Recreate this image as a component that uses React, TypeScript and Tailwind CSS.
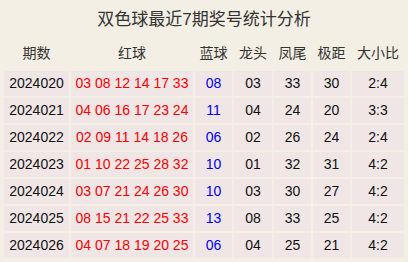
const rows = [
  { qi: "2024020", red: "03 08 12 14 17 33", blue: "08", head: "03", tail: "33", span: "30", ratio: "2:4" },
  { qi: "2024021", red: "04 06 16 17 23 24", blue: "11", head: "04", tail: "24", span: "20", ratio: "3:3" },
  { qi: "2024022", red: "02 09 11 14 18 26", blue: "06", head: "02", tail: "26", span: "24", ratio: "2:4" },
  { qi: "2024023", red: "01 10 22 25 28 32", blue: "10", head: "01", tail: "32", span: "31", ratio: "4:2" },
  { qi: "2024024", red: "03 07 21 24 26 30", blue: "10", head: "03", tail: "30", span: "27", ratio: "4:2" },
  { qi: "2024025", red: "08 15 21 22 25 33", blue: "13", head: "08", tail: "33", span: "25", ratio: "4:2" },
  { qi: "2024026", red: "04 07 18 19 20 25", blue: "06", head: "04", tail: "25", span: "21", ratio: "4:2" },
];

const headers = ["期数", "红球", "蓝球", "龙头", "凤尾", "极距", "大小比"];

export default function App() {
  return (
    <div className="w-[408px] h-[262px] bg-[#f4efe4] font-['Liberation_Sans','Noto_Sans_CJK_SC',sans-serif] overflow-hidden">
      <div className="h-[36px] pt-[4px] flex items-center justify-center text-[17px] text-[#333]">
        双色球最近7期奖号统计分析
      </div>
      <table className="ml-[2px] w-[404px] table-fixed border-separate border-spacing-[2px] text-[14px]">
        <colgroup>
          <col className="w-[65px]" />
          <col className="w-[122px]" />
          <col className="w-[37px]" />
          <col className="w-[38px]" />
          <col className="w-[37px]" />
          <col className="w-[37px]" />
          <col className="w-[52px]" />
        </colgroup>
        <thead>
          <tr>
            {headers.map((h) => (
              <th key={h} className="h-[31px] p-0 font-normal text-[#333] text-center">
                {h}
              </th>
            ))}
          </tr>
        </thead>
        <tbody>
          {rows.map((r) => (
            <tr key={r.qi}>
              <td className="h-[25px] p-0 bg-[#f0e6e6] text-center text-[#111]">{r.qi}</td>
              <td className="h-[25px] p-0 bg-[#f0e6e6] text-center text-[#ff0000]">{r.red}</td>
              <td className="h-[25px] p-0 bg-[#f0e6e6] text-center text-[#0000ff]">{r.blue}</td>
              <td className="h-[25px] p-0 bg-[#f0e6e6] text-center text-[#111]">{r.head}</td>
              <td className="h-[25px] p-0 bg-[#f0e6e6] text-center text-[#111]">{r.tail}</td>
              <td className="h-[25px] p-0 bg-[#f0e6e6] text-center text-[#111]">{r.span}</td>
              <td className="h-[25px] p-0 bg-[#f0e6e6] text-center text-[#111]">{r.ratio}</td>
            </tr>
          ))}
        </tbody>
      </table>
    </div>
  );
}
